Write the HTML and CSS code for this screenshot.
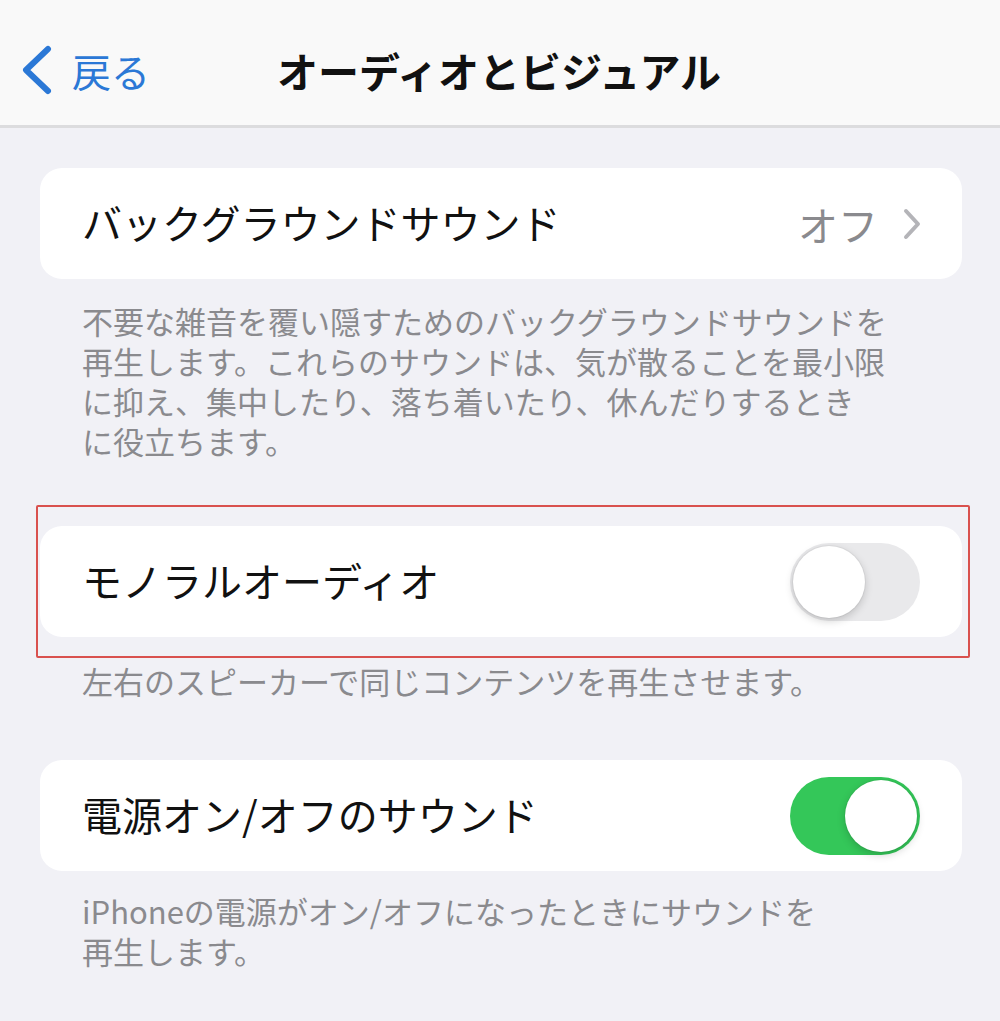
FILE: index.html
```html
<!DOCTYPE html>
<html lang="ja">
<head>
  <meta charset="UTF-8">
  <title>オーディオとビジュアル</title>
  <meta name="viewport" content="width=device-width, initial-scale=1.0">
  <link rel="stylesheet" href="styles.css">
</head>
<body>
  <header class="nav">
    <a class="back" href="#">
      <svg class="back-icon" width="34" height="50" viewBox="0 0 34 50">
        <path d="M28 4 L6 25 L28 46" fill="none" stroke="#2b78d6" stroke-width="6" stroke-linecap="round" stroke-linejoin="round"/>
      </svg>
      <span>戻る</span>
    </a>
    <h1 class="title">オーディオとビジュアル</h1>
    <div></div>
  </header>

  <main class="list">
    <section class="group first">
      <div class="cell">
        <span class="label">バックグラウンドサウンド</span>
        <span class="detail">
          オフ
          <svg width="20" height="32" viewBox="0 0 20 32">
            <path d="M4 3 L16 16 L4 29" fill="none" stroke="#b4b4b8" stroke-width="4" stroke-linecap="round" stroke-linejoin="round"/>
          </svg>
        </span>
      </div>
      <p class="note">不要な雑音を覆い隠すためのバックグラウンドサウンドを<br>再生します。これらのサウンドは、気が散ることを最小限<br>に抑え、集中したり、落ち着いたり、休んだりするとき<br>に役立ちます。</p>
    </section>

    <section class="group">
      <div class="highlight">
        <div class="cell">
          <span class="label">モノラルオーディオ</span>
          <span class="switch"><span class="knob"></span></span>
        </div>
      </div>
      <p class="note tight">左右のスピーカーで同じコンテンツを再生させます。</p>
    </section>

    <section class="group last">
      <div class="cell">
        <span class="label">電源オン/オフのサウンド</span>
        <span class="switch on"><span class="knob"></span></span>
      </div>
      <p class="note">iPhoneの電源がオン/オフになったときにサウンドを<br>再生します。</p>
    </section>
  </main>
</body>
</html>
```

FILE: styles.css
```css
body {
  margin: 0;
  background: #f1f1f6;
  font-family: "Noto Sans CJK JP", "Noto Sans", sans-serif;
  color: #111;
}

.nav {
  height: 111px;
  padding-top: 14px;
  display: grid;
  grid-template-columns: 1fr auto 1fr;
  align-items: center;
  background: #f9f9f9;
  border-bottom: 3px solid #dcdcde;
}
.back {
  display: flex;
  align-items: center;
  gap: 18px;
  padding-left: 20px;
  color: #2b78d6;
  text-decoration: none;
  font-size: 39px;
}
.title {
  margin: 0 0 0 -2px;
  font-size: 41px;
  font-weight: 700;
}

.list { padding: 0 38px 0 40px; }

.group { margin-top: 44px; }
.group.first { margin-top: 40px; }
.group.last { margin-top: 59px; }

.cell {
  height: 111px;
  display: flex;
  align-items: center;
  justify-content: space-between;
  padding: 0 42px;
  background: #fff;
  border-radius: 22px;
}
.label {
  font-size: 40px;
  line-height: 1;
  margin-top: -4px;
}
.detail {
  display: flex;
  align-items: center;
  gap: 24px;
  font-size: 40px;
  color: #8a8a8e;
  margin-right: -2px;
}

.highlight {
  margin: 0 -8px 0 -4px;
  padding: 19px 6px 19px 2px;
  border: 2px solid #d9514e;
  border-radius: 2px;
}

.switch {
  position: relative;
  width: 130px;
  height: 78px;
  border-radius: 39px;
  background: #e9e9eb;
}
.switch .knob {
  position: absolute;
  top: 3px;
  left: 3px;
  width: 72px;
  height: 72px;
  border-radius: 50%;
  background: #fff;
  box-shadow: 0 3px 8px rgba(0, 0, 0, 0.18), 0 0 0 1px rgba(0, 0, 0, 0.04);
}
.switch.on { background: #34c759; }
.switch.on .knob { left: 55px; }

.note {
  margin: 22px 0 0;
  padding: 0 42px;
  font-size: 31px;
  line-height: 40px;
  color: #8a8a8e;
}
.note.tight { margin-top: 3px; }
.group.last .note { margin-top: 20px; }
```
